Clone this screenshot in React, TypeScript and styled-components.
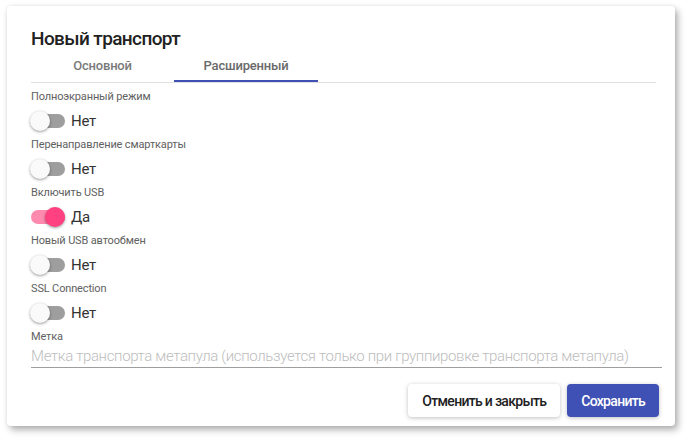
import { useState } from "react";
import styled, { createGlobalStyle } from "styled-components";

const GlobalStyle = createGlobalStyle`
    html, body {
        margin: 0;
        padding: 0;
        background: #ffffff;
        font-family: Roboto, "Noto Sans", "Liberation Sans", sans-serif;
    }
`;

const Page = styled.div`
    padding: 6px 14px 15px 7px;
`;

const Card = styled.div`
    width: 668px;
    height: 420px;
    box-sizing: border-box;
    padding: 21px 13px 0 24px;
    background: #ffffff;
    border-radius: 4px;
    box-shadow: 0 0 4px rgba(0, 0, 0, 0.08), 3px 4px 7px rgba(0, 0, 0, 0.3);
    display: flex;
    flex-direction: column;
`;

const Title = styled.h2`
    margin: 0;
    font-size: 19px;
    line-height: 24px;
    font-weight: 500;
    letter-spacing: -0.6px;
    color: #212121;
`;

const TabRow = styled.div`
    display: flex;
    height: 31px;
    margin-right: 6px;
    border-bottom: 1px solid #e0e0e0;
`;

const Tab = styled.div<{ $active?: boolean; $width: number }>`
    width: ${({ $width }) => $width}px;
    box-sizing: border-box;
    display: flex;
    align-items: center;
    justify-content: center;
    font-size: 13px;
    font-weight: 500;
    letter-spacing: -0.2px;
    color: ${({ $active }) => ($active ? "#6a6a6a" : "#7a7a7a")};
    border-bottom: 2px solid ${({ $active }) => ($active ? "#3f51b5" : "transparent")};
    cursor: pointer;
`;

const Fields = styled.div`
    padding-top: 7px;
    display: flex;
    flex-direction: column;
`;

const Field = styled.div`
    display: flex;
    flex-direction: column;
`;

const Label = styled.label`
    font-size: 11px;
    line-height: 14px;
    letter-spacing: -0.15px;
    color: #616161;
`;

const SwitchRow = styled.div`
    height: 34px;
    display: flex;
    align-items: center;
    gap: 6px;
`;

const SwitchBox = styled.div`
    position: relative;
    width: 35px;
    height: 20px;
    margin-left: -1px;
    cursor: pointer;
`;

const Track = styled.span<{ $on: boolean }>`
    position: absolute;
    left: 1px;
    right: 0;
    top: 3px;
    height: 14px;
    border-radius: 7px;
    background: ${({ $on }) => ($on ? "#ff8ab0" : "#9e9e9e")};
`;

const Thumb = styled.span<{ $on: boolean }>`
    position: absolute;
    top: 0;
    left: ${({ $on }) => ($on ? "15px" : "0")};
    width: 20px;
    height: 20px;
    border-radius: 50%;
    background: ${({ $on }) => ($on ? "#ff4081" : "#fafafa")};
    box-shadow: 0 1px 3px rgba(0, 0, 0, 0.4);
`;

const SwitchText = styled.span`
    font-size: 15px;
    letter-spacing: -0.3px;
    color: #333333;
`;

const TextInput = styled.input`
    width: 100%;
    box-sizing: border-box;
    height: 24px;
    padding: 0;
    border: none;
    border-bottom: 1px solid #9e9e9e;
    font-family: inherit;
    font-size: 15px;
    font-weight: 300;
    letter-spacing: -0.35px;
    color: #212121;
    background: transparent;
    outline: none;

    &::placeholder {
        color: #bdbdbd;
    }
`;

const Actions = styled.div`
    margin-top: 16px;
    padding-right: 3px;
    display: flex;
    justify-content: flex-end;
    gap: 7px;
`;

const Button = styled.button<{ $primary?: boolean }>`
    height: 33px;
    padding: 0 14px;
    border: none;
    border-radius: 4px;
    font-family: inherit;
    font-size: 14px;
    font-weight: 500;
    letter-spacing: -0.7px;
    color: ${({ $primary }) => ($primary ? "#ffffff" : "#212121")};
    background: ${({ $primary }) => ($primary ? "#3f51b5" : "#ffffff")};
    box-shadow: 0 1px 4px rgba(0, 0, 0, 0.25);
    cursor: pointer;
`;

type ToggleProps = {
    label: string;
    value: boolean;
    onToggle: () => void;
};

const ToggleField = ({ label, value, onToggle }: ToggleProps) => (
    <Field>
        <Label>{label}</Label>
        <SwitchRow>
            <SwitchBox onClick={onToggle}>
                <Track $on={value} />
                <Thumb $on={value} />
            </SwitchBox>
            <SwitchText>{value ? "Да" : "Нет"}</SwitchText>
        </SwitchRow>
    </Field>
);

const initial = [
    { label: "Полноэкранный режим", value: false },
    { label: "Перенаправление смарткарты", value: false },
    { label: "Включить USB", value: true },
    { label: "Новый USB автообмен", value: false },
    { label: "SSL Connection", value: false },
];

export default function App() {
    const [tab, setTab] = useState(1);
    const [toggles, setToggles] = useState(initial);
    const [tag, setTag] = useState("");

    const flip = (i: number) =>
        setToggles(toggles.map((t, idx) => (idx === i ? { ...t, value: !t.value } : t)));

    return (
        <Page>
            <GlobalStyle />
            <Card>
                <Title>Новый транспорт</Title>
                <TabRow>
                    <Tab $width={143} $active={tab === 0} onClick={() => setTab(0)}>Основной</Tab>
                    <Tab $width={144} $active={tab === 1} onClick={() => setTab(1)}>Расширенный</Tab>
                </TabRow>
                <Fields>
                    {toggles.map((t, i) => (
                        <ToggleField key={t.label} label={t.label} value={t.value} onToggle={() => flip(i)} />
                    ))}
                    <Field>
                        <Label>Метка</Label>
                        <TextInput
                            value={tag}
                            onChange={(e) => setTag(e.target.value)}
                            placeholder="Метка транспорта метапула (используется только при группировке транспорта метапула)"
                        />
                    </Field>
                </Fields>
                <Actions>
                    <Button>Отменить и закрыть</Button>
                    <Button $primary>Сохранить</Button>
                </Actions>
            </Card>
        </Page>
    );
}
